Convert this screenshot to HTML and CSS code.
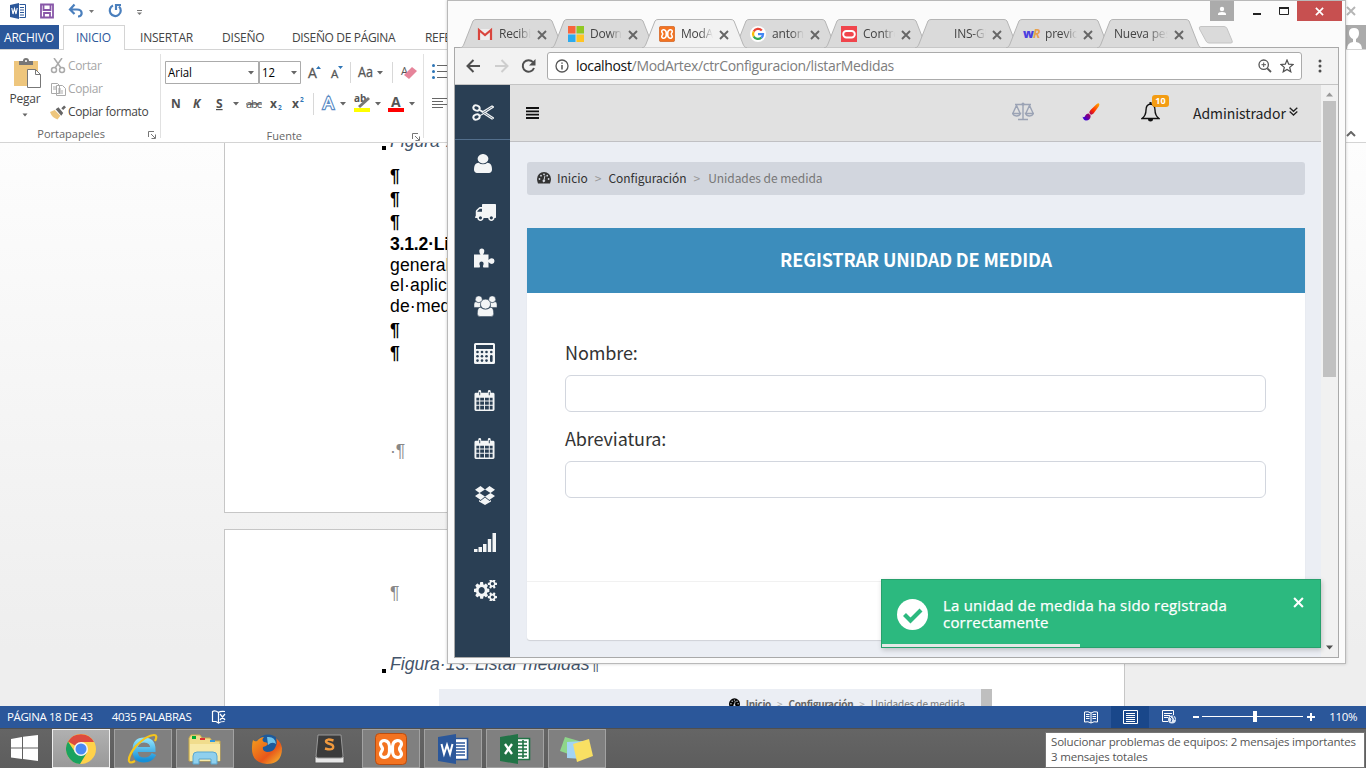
FILE: index.html
```html
<!DOCTYPE html>
<html lang="es">
<head>
<meta charset="utf-8">
<title>Escritorio</title>
<link rel="stylesheet" href="styles.css">
</head>
<body>
<svg class="defs" aria-hidden="true">
  <defs>
    <symbol id="tabshape" viewBox="0 0 105 29"><path d="M0 29C3 28 3 27 4 25L13 2Q14 .5 16 .5H89Q91 .5 92 2L101 25C102 27 102 28 105 29Z"/></symbol>
    <symbol id="x" viewBox="0 0 10 10"><path d="M1 1l8 8M9 1L1 9" fill="none" stroke="currentColor" stroke-width="1.9"/></symbol>
    <symbol id="caret" viewBox="0 0 6 4"><path d="M.5.5h5L3 3.5z" fill="#666"/></symbol>
    <symbol id="launch" viewBox="0 0 8 8"><path d="M.5 6V.5H6M3 3l4 4M7.5 3.5v4h-4" fill="none" stroke="#777"/></symbol>
    <symbol id="calendar" viewBox="0 0 21 22"><path fill-rule="evenodd" d="M1.500 3H4V1.500Q4 0 5.500 0T7 1.500V3H14V1.500Q14 0 15.500 0T17 1.500V3H19.500Q21 3 21 4.500V20.500Q21 22 19.500 22H1.500Q0 22 0 20.500V4.500Q0 3 1.500 3ZM5 2V5.500H6V2ZM15 2V5.500H16V2ZM2 8v3h3V8ZM6 8v3h4V8ZM11 8v3h4V8ZM16 8v3h3V8ZM2 12v3.500h3V12ZM6 12v3.500h4V12ZM11 12v3.500h4V12ZM16 12v3.500h3V12ZM2 16.500v4h3v-4ZM6 16.500v4h4v-4ZM11 16.500v4h4v-4ZM16 16.500v4h3v-4Z"/></symbol>
    <symbol id="xampp" viewBox="0 0 32 32"><rect x=".5" y=".5" width="31" height="31" rx="4" fill="#f37321" stroke="#b94d10"/><path d="M14.500 13.500C14 6 5.500 6 5.500 11 5.500 13.500 7.500 14 7.500 16 7.500 18 5.500 18.500 5.500 21 5.500 26 14 26 14.500 18.500ZM17.500 13.500C18 6 26.500 6 26.500 11 26.500 13.500 24.500 14 24.500 16 24.500 18 26.500 18.500 26.500 21 26.500 26 18 26 17.500 18.500Z" fill="none" stroke="#fff" stroke-width="3.200" stroke-linejoin="round"/></symbol>
    <symbol id="gauge" viewBox="0 0 14 12"><path d="M7 0a7 7 0 0 1 7 7q0 2-1 4.500H1Q0 9 0 7a7 7 0 0 1 7-7Z"/><g fill="#d2d6de"><circle cx="2.500" cy="7" r=".9"/><circle cx="4" cy="3.700" r=".9"/><circle cx="7" cy="2.300" r=".9"/><circle cx="10.200" cy="3.700" r=".9"/><circle cx="11.600" cy="7" r=".9"/><path d="M7.500 3.500l.9.3-.8 4a1.300 1.300 0 1 1-1-.2z"/></g></symbol>
    <linearGradient id="paint" x1="1" y1="0" x2="0" y2="1"><stop offset="0" stop-color="#ffb000"/><stop offset=".4" stop-color="#ff2a00"/><stop offset=".62" stop-color="#a00060"/><stop offset="1" stop-color="#1800ff"/></linearGradient>
    <linearGradient id="iegrad" x1="0" y1="0" x2="0" y2="1"><stop offset="0" stop-color="#8be0fb"/><stop offset="1" stop-color="#1590d8"/></linearGradient>
    <linearGradient id="fox" x1="0" y1="0" x2="1" y2="1"><stop offset="0" stop-color="#f5a11c"/><stop offset=".6" stop-color="#e8571a"/><stop offset="1" stop-color="#f7c331"/></linearGradient>
  </defs>
</svg>

<main class="word">
  <header class="titlebar">
    <svg class="qat" width="150" height="25" viewBox="0 0 150 25">
      <path d="M10 5l9-2v16l-9-2z" fill="#2b579a"/><path d="M19.500 4.500h6v13h-6M20 7.500h4M20 10h4M20 12.500h4M20 15h4" fill="none" stroke="#2b579a"/><path d="M11.800 8l1.200 6 1.500-5.500L16 14l1.200-6" fill="none" stroke="#fff" stroke-width="1.100"/>
      <path d="M41 4.500h12v13H41zM43.500 5v5h7V5M44 17v-4h6v4" fill="none" stroke="#8857a8" stroke-width="1.800"/>
      <path d="M70 9.500h7c6 0 6 7 1 7M74.500 4.500L70 9.500l4.500 4.500" fill="none" stroke="#4a7fbd" stroke-width="2.200"/>
      <path d="M89 10h5l-2.500 3z" fill="#777"/>
      <path d="M113 5.500a5.500 5.500 0 1 0 6 1M116 10V5h5" fill="none" stroke="#4a7fbd" stroke-width="2.200"/>
      <path d="M137 10.500h5" stroke="#777"/><path d="M137 12.500h5l-2.500 2.500z" fill="#777"/>
    </svg>
    <svg class="word-close" width="10" height="10"><use href="#x"/></svg>
  </header>
  <nav class="wtabs">
    <span class="wtab file">ARCHIVO</span>
    <span class="wtab current">INICIO</span>
    <span class="wtab insert">INSERTAR</span>
    <span class="wtab design">DISEÑO</span>
    <span class="wtab layout">DISEÑO DE PÁGINA</span>
    <span class="wtab refs">REFERENCIAS</span>
    <svg class="avatar" width="20" height="24" viewBox="0 0 20 24"><path fill="#ababab" d="M0 0h20v24H0z"/><path d="M1 24q0-6 6-7v-3Q3 12 3 8q0-5 5-5t5 5q0 4-3 6v3q6 1 6 7z" fill="#fff"/></svg>
  </nav>
  <section class="ribbon">
    <div class="group clip">
      <div class="clip-body">
        <div class="paste">
          <svg width="32" height="32" viewBox="0 0 32 32"><path d="M2 3h24v25H2z" fill="#eec67d"/><path d="M7 7V3h4q0-3 3-3t3 3h4v4z" fill="#777"/><circle cx="14" cy="3" r="1" fill="#fff"/><path d="M15.500 11.500h8l5 5v13h-13z" fill="#fff" stroke="#777"/><path d="M23.500 11.500v5h5" fill="none" stroke="#777"/></svg>
          <span class="paste-label">Pegar</span>
          <svg width="6" height="4"><use href="#caret"/></svg>
        </div>
        <div class="cmds">
          <div class="cmd off"><svg width="16" height="16" viewBox="0 0 16 16"><g fill="none" stroke="#aaa" stroke-width="1.500"><path d="M4 0l7 10M12 0L5 10"/><circle cx="4" cy="12" r="2.500"/><circle cx="12" cy="12" r="2.500"/></g></svg><span>Cortar</span></div>
          <div class="cmd off copy"><svg width="16" height="16" viewBox="0 0 16 16"><g fill="#fff" stroke="#aaa"><path d="M1.500 2.500h6l2 2v8h-8zM6.500 4.500h6l3 3v7h-9z"/><path d="M3 6h3M3 8h3M8 8h3M8 10h5M8 12h5"/></g></svg><span>Copiar</span></div>
          <div class="cmd fmt"><svg width="16" height="16" viewBox="0 0 17 16"><path d="M0 8l5-2 6 6-3 4q-6-2-8-8z" fill="#eec67d"/><path d="M6 5l3-2 5 6-2 3zM12 4l3-3 2 2-3 3z" fill="#666"/></svg><span>Copiar formato</span></div>
        </div>
      </div>
      <div class="group-label"><span class="lbl-clip">Portapapeles</span><svg width="8" height="8"><use href="#launch"/></svg></div>
    </div>
    <div class="group font">
      <svg class="font-tools" width="262" height="66" viewBox="0 0 262 66">
        <g fill="#fff" stroke="#ababab"><path d="M4.500 3.500h93v22h-93zM98.500 3.500h41v22h-41z"/></g>
        <g fill="#666"><path d="M87 13h6l-3 3.500zM130 13h6l-3 3.500zM216 13h6l-3 3.500zM72 44h6l-3 3.500zM179 44h6l-3 3.500zM214 44h6l-3 3.500zM248 44h6l-3 3.500z"/></g>
        <g font-family="Open Sans" font-size="12" fill="#000"><text x="7" y="19" textLength="24" lengthAdjust="spacingAndGlyphs">Arial</text><text x="101" y="19" textLength="13" lengthAdjust="spacingAndGlyphs">12</text></g>
        <g font-family="Open Sans" fill="#555" stroke="#555" stroke-width=".3"><text x="147" y="20" font-size="14">A</text><text x="170" y="20" font-size="11.500">A</text><text x="197" y="19" font-size="14" textLength="15" lengthAdjust="spacingAndGlyphs">Aa</text></g>
        <path d="M155 11h5l-2.500-3zM177 8h5l-2.500 3z" fill="#2e75b6"/>
        <path d="M189.500 4v21M231.500 4v21M152.500 35v22" stroke="#d8d8d8"/>
        <text x="240" y="17" font-size="11" font-family="Open Sans" fill="#555">A</text><path d="M243 17l8-8 5 4-8 8z" fill="#e6849a"/>
        <g fill="#505050" font-family="Open Sans" font-weight="bold" font-size="12"><text x="10" y="50">N</text><text x="32" y="50" font-style="italic">K</text><text x="55" y="50" text-decoration="underline">S</text><text x="85" y="50" font-size="11" font-weight="normal" text-decoration="line-through" textLength="16">abc</text><text x="109" y="50">x</text><text x="131" y="50">x</text></g>
        <g fill="#2e75b6" font-family="Open Sans" font-weight="bold" font-size="6.500"><text x="117" y="52">2</text><text x="139" y="44">2</text></g>
        <text x="162" y="51" font-family="Open Sans" font-size="17" fill="#fff" stroke="#5b8bc4" stroke-width="2.400" paint-order="stroke">A</text>
        <text x="193" y="44" font-size="10" font-weight="bold" font-family="Open Sans" fill="#555">ab</text><path d="M198 49l10-9" stroke="#777" stroke-width="3"/><path d="M193 50h16v4h-16z" fill="#ff0"/>
        <text x="230" y="49" font-size="14" font-weight="bold" font-family="Open Sans" fill="#555">A</text><path d="M227 50h16v4h-16z" fill="#f00"/>
      </svg>
      <div class="group-label"><span class="lbl-font">Fuente</span><svg width="8" height="8"><use href="#launch"/></svg></div>
    </div>
    <div class="group para">
      <svg width="24" height="60" viewBox="0 0 24 60"><g fill="#2e75b6"><circle cx="9.500" cy="11.500" r="1.500"/><circle cx="9.500" cy="17.500" r="1.500"/><circle cx="9.500" cy="23.500" r="1.500"/></g><path d="M13 11.500h11M13 17.500h11M13 23.500h11M8 44.500h16M8 47.500h11M8 50.500h16M8 53.500h11" stroke="#666"/></svg>
    </div>
    <svg class="collapse" width="10" height="6" viewBox="0 0 10 6"><path d="M1 5l4-4 4 4" fill="none" stroke="#666" stroke-width="2"/></svg>
  </section>

  <section class="canvas">
    <article class="sheet first">
      <p class="caption"><i class="dot"></i>Figura·12.</p>
      <p class="mark">¶</p><p class="mark">¶</p><p class="mark">¶</p>
      <p class="line"><b>3.1.2·Li</b></p><p class="line">general</p><p class="line">el·aplica</p><p class="line">de·medi</p>
      <p class="mark gap">¶</p><p class="mark">¶</p>
      <p class="mark foot">·¶</p>
    </article>
    <article class="sheet second">
      <p class="mark head">¶</p>
      <p class="caption cap2"><i class="dot"></i>Figura·13. Listar medidas¶</p>
      <div class="shot"><div class="shot-crumb"><svg width="11" height="10"><use href="#gauge"/></svg><b>Inicio</b><em>&gt;</em><b>Configuración</b><em>&gt;</em><span>Unidades de medida</span></div><i class="shot-scroll"></i></div>
    </article>
  </section>

  <footer class="status">
    <span class="st-page">PÁGINA 18 DE 43</span><span class="st-words">4035 PALABRAS</span>
    <svg width="16" height="14" viewBox="0 0 16 14"><path d="M7.500 2.500Q4 0 1.500 1.500v10H5l2.500 1.500zM7.500 2.500Q9 1 14 1.500M7.500 13q2-1.500 6-1.500M9 4l5 6M14 4l-5 6" fill="none" stroke="#fff" stroke-width="1.200"/></svg>
    <div class="views">
      <svg class="v-read" width="14" height="13" viewBox="0 0 14 13"><path d="M7 2Q4 0 .5 1v10Q4 10 7 12q3-2 6.500-1V1Q10 0 7 2zv10M2 3.500h3.500M2 5.500h3.500M2 7.500h3.500M8.500 3.500H12M8.500 5.500H12M8.500 7.500H12" fill="none" stroke="#fff"/></svg>
      <span class="v-print"><svg width="15" height="14" viewBox="0 0 15 14"><path d="M.5.500h14v13H.5zM3 3.500h9M3 5.500h9M3 7.500h9M3 9.500h9M3 11.500h9" fill="none" stroke="#fff"/></svg></span>
      <svg class="v-web" width="15" height="14" viewBox="0 0 15 14"><path d="M6 11.500H.5V.5h11V5M2 3.500h8M2 5.500h6M2 7.500h4" fill="none" stroke="#fff"/><circle cx="10" cy="9.500" r="4" fill="#dce6f4"/><path d="M8 7l2 2-1 3M11 6l2 4" stroke="#2b579a" fill="none"/></svg>
      <svg class="zoom" width="124" height="12" viewBox="0 0 124 12"><path d="M0 6h6M114 6h8M118 2v8" stroke="#fff" stroke-width="2"/><path d="M9 5.500h101" stroke="#fff"/><path d="M60 0h4v11h-4z" fill="#fff"/></svg>
      <span class="pct">110%</span>
    </div>
  </footer>
</main>

<section class="browser">
  <div class="tabstrip">
    <div class="tab"><svg class="shape"><use href="#tabshape"/></svg><svg class="fav" viewBox="0 0 16 16"><path d="M1 3h14v11H1z" fill="#eee"/><path d="M2 14V4l6 5 6-5v10" fill="none" stroke="#d9453d" stroke-width="2.200"/></svg><span class="name">Recibidos</span><svg class="tx"><use href="#x"/></svg></div>
    <div class="tab"><svg class="shape"><use href="#tabshape"/></svg><svg class="fav" viewBox="0 0 16 16"><path d="M0 0h7.500v7.500H0z" fill="#f8643c"/><path d="M8.500 0H16v7.500H8.500z" fill="#91c823"/><path d="M0 8.500h7.500V16H0z" fill="#2cabee"/><path d="M8.500 8.500H16V16H8.500z" fill="#ffc423"/></svg><span class="name">Download</span><svg class="tx"><use href="#x"/></svg></div>
    <div class="tab active"><svg class="shape"><use href="#tabshape"/></svg><svg class="fav"><use href="#xampp"/></svg><span class="name">ModArtex</span><svg class="tx"><use href="#x"/></svg></div>
    <div class="tab"><svg class="shape"><use href="#tabshape"/></svg><svg class="fav" viewBox="0 0 16 16"><circle cx="8" cy="8" r="8" fill="#fff"/><g fill="none" stroke-width="2.300"><path d="M11.800 4.600A5 5 0 0 0 3.700 5.500" stroke="#ea4335"/><path d="M3.700 5.500a5 5 0 0 0 0 5" stroke="#fbbc05"/><path d="M3.700 10.500a5 5 0 0 0 7.600 1.200" stroke="#34a853"/><path d="M11.300 11.700Q13 10.500 13 8.200H8" stroke="#4285f4"/></g></svg><span class="name">antonio</span><svg class="tx"><use href="#x"/></svg></div>
    <div class="tab"><svg class="shape"><use href="#tabshape"/></svg><svg class="fav" viewBox="0 0 16 16"><path fill="#f0454c" d="M0 0h16v16H0z"/><rect x="2.200" y="5" width="11.600" height="6.500" rx="3.200" fill="none" stroke="#fff" stroke-width="1.900"/></svg><span class="name">Control</span><svg class="tx"><use href="#x"/></svg></div>
    <div class="tab"><svg class="shape"><use href="#tabshape"/></svg><svg class="fav"></svg><span class="name">INS-GU</span><svg class="tx"><use href="#x"/></svg></div>
    <div class="tab"><svg class="shape"><use href="#tabshape"/></svg><span class="fav wr"><b>w</b><i>R</i></span><span class="name">previous</span><svg class="tx"><use href="#x"/></svg></div>
    <div class="tab plain"><svg class="shape"><use href="#tabshape"/></svg><span class="name">Nueva pestaña</span><svg class="tx"><use href="#x"/></svg></div>
    <svg class="newtab" width="36" height="18" viewBox="0 0 36 18"><path d="M3 .5h23q2 0 3 2l5 12q1 2.500-1 2.500H11q-2 0-3-2L1.500 3Q.5.500 3 .5z" fill="#dadada" stroke="#c4c4c4"/></svg>
    <div class="winbtns">
      <span class="who"><svg width="10" height="10" viewBox="0 0 10 10"><circle cx="5" cy="3" r="2.200" fill="#fff"/><path d="M1 9V8q0-2 4-2t4 2v1z" fill="#fff"/></svg></span>
      <svg width="63" height="20" viewBox="0 0 63 20"><path d="M19 13h8" stroke="#222" stroke-width="2"/><path d="M45.500 6.500h9v7h-9z" fill="none" stroke="#222"/><path d="M45 7h10" stroke="#222" stroke-width="2"/></svg>
      <span class="close"><svg width="9" height="9"><use href="#x"/></svg></span>
    </div>
  </div>
  <div class="client">
    <div class="toolbar">
      <svg width="90" height="20" viewBox="0 0 90 20"><path d="M25 10H13M18.500 4L12.500 10l6 6" fill="none" stroke="#4f4f4f" stroke-width="2"/><path d="M40 10h12M46.500 4l6 6-6 6" fill="none" stroke="#cecece" stroke-width="2"/><path d="M78 6.200A5.800 5.800 0 1 0 79 12" fill="none" stroke="#4f4f4f" stroke-width="2"/><path d="M80.500 3v6.500H74z" fill="#4f4f4f"/></svg>
      <div class="omni">
        <svg width="14" height="14" viewBox="0 0 14 14"><circle cx="7" cy="7" r="6" fill="none" stroke="#555" stroke-width="1.300"/><path d="M7 6v4.500M7 3.500v1.300" stroke="#555" stroke-width="1.500"/></svg>
        <span class="url">localhost<em>/ModArtex/ctrConfiguracion/listarMedidas</em></span>
        <svg class="mag" width="14" height="14" viewBox="0 0 14 14"><circle cx="5.700" cy="5.700" r="4.700" fill="none" stroke="#555" stroke-width="1.300"/><path d="M9.300 9.300L13 13" stroke="#555" stroke-width="1.800"/><path d="M3.500 5.700H8M5.700 3.500V8" stroke="#555"/></svg>
        <svg width="14" height="14" viewBox="0 0 14 14"><path d="M7 1l1.700 4.200 4.400.3-3.400 2.900 1.100 4.400L7 10.400l-3.800 2.400 1.100-4.400L.9 5.500l4.400-.3z" fill="none" stroke="#4f4f4f" stroke-width="1.200"/></svg>
      </div>
      <svg class="dots" width="4" height="14" viewBox="0 0 4 14"><g fill="#4f4f4f"><circle cx="2" cy="2" r="1.500"/><circle cx="2" cy="7" r="1.500"/><circle cx="2" cy="12" r="1.500"/></g></svg>
    </div>
    <div class="viewport">
      <aside class="side">
        <div class="logo"><svg width="22" height="17" viewBox="0 0 22 17"><g fill="none" stroke="#f3f5f6"><ellipse cx="4.500" cy="4" rx="3.200" ry="2.500" stroke-width="2" transform="rotate(20 4.500 4)"/><ellipse cx="4.500" cy="13" rx="3.200" ry="2.500" stroke-width="2" transform="rotate(-20 4.500 13)"/><path d="M7 5.500l4 2L20 2l1.500 1L10 10.500l-3 1.500M7 5.500L10 8M10 8.500L20 15l1.500-1-9-6" stroke-width="1.200"/></g></svg></div>
        <svg class="ic user" width="18" height="19" viewBox="256 128 1280 1408" preserveAspectRatio="none"><path d="M1536 1399q0 109-62.500 187t-150.500 78h-854q-88 0-150.500-78t-62.500-187q0-85 8.500-160.500t31.500-152 58.500-131 94-89 134.500-34.500q131 128 313 128t313-128q76 0 134.500 34.500t94 89 58.500 131 31.500 152 8.500 160.500zm-256-887q0 159-112.500 271.500t-271.500 112.500-271.500-112.500-112.500-271.500 112.500-271.500 271.500-112.500 271.500 112.500 112.500 271.500z" transform="matrix(1 0 0 .917 0 10)"/></svg>
        <svg class="ic truck" width="21" height="17" viewBox="64 256 1728 1408" preserveAspectRatio="none"><path d="M640 1408q0-52-38-90t-90-38-90 38-38 90 38 90 90 38 90-38 38-90zm-384-512h384v-256h-158q-13 0-22 9l-195 195q-9 9-9 22v30zm1280 512q0-52-38-90t-90-38-90 38-38 90 38 90 90 38 90-38 38-90zm256-1088v1024q0 15-4 26.500t-13.500 18.500-16.500 11.500-23.500 6-22.500 2-25.500 0-22.500-.5q0 106-75 181t-181 75-181-75-75-181h-384q0 106-75 181t-181 75-181-75-75-181h-64q-3 0-22.500.5t-25.500 0-22.500-2-23.500-6-16.500-11.500-13.500-18.500-4-26.500q0-26 19-45t45-19v-320q0-8-.5-35t0-38 2.500-34.500 6.500-37 14-30.500 22.500-30l198-198q19-19 50.500-32t58.500-13h160v-192q0-26 19-45t45-19h1024q26 0 45 19t19 45z"/></svg>
        <svg class="ic puzzle" width="21" height="20" viewBox="0 0 21 20"><path d="M0 6.500H6.500Q5.300 5 5.300 3A2.500 2.500 0 0 1 10.300 3Q10.300 5 9 6.500H14.500V12Q16 10 18 10.200Q20.500 10.500 20.500 13T18 16Q16 16 14.500 14V19.500H9.500Q8.500 18.500 9.500 16.500Q10 13.500 7.500 13.500T5.500 16.500Q6.500 18.500 5.500 19.500H0Z"/></svg>
        <svg class="ic users" width="23" height="21" viewBox="0 0 24 22" preserveAspectRatio="none"><g stroke="#2a3f54" stroke-width=".5"><circle cx="5" cy="3.500" r="3.600"/><circle cx="19" cy="3.500" r="3.600"/><path d="M0 12V9q0-3 2-3 3 2 5.500 0Q6 10 7 12zM24 12V9q0-3-2-3-3 2-5.500 0Q18 10 17 12z"/><circle cx="12" cy="8.500" r="5.200"/><path d="M3.500 18.500q0-7 3.500-6.500 5 4 10 0 3.500-.5 3.500 6.500 0 3-3 3h-11q-3 0-3-3z"/></g></svg>
        <svg class="ic calc" width="21" height="21" viewBox="0 0 21 21"><path fill-rule="evenodd" d="M1.500 0h18Q21 0 21 1.500v18q0 1.500-1.500 1.500h-18Q0 21 0 19.500v-18Q0 0 1.500 0zM2 2v4h17V2z"/><g fill="#2a3f54"><circle cx="3.500" cy="9" r="1.300"/><circle cx="8" cy="9" r="1.300"/><circle cx="12.500" cy="9" r="1.300"/><circle cx="17.300" cy="9" r="1.300"/><circle cx="3.500" cy="13.300" r="1.300"/><circle cx="8" cy="13.300" r="1.300"/><circle cx="12.500" cy="13.300" r="1.300"/><circle cx="3.500" cy="17.600" r="1.300"/><circle cx="8" cy="17.600" r="1.300"/><circle cx="12.500" cy="17.600" r="1.300"/><rect x="16" y="12" width="2.600" height="7" rx="1.200"/></g></svg>
        <svg class="ic cal1" width="21" height="21"><use href="#calendar"/></svg>
        <svg class="ic cal2" width="21" height="21"><use href="#calendar"/></svg>
        <svg class="ic box" width="20" height="19" viewBox="0 0 20 19"><path d="M5.500 0L10 3.500 4.500 7 0 3.800zM14.500 0L10 3.500 15.500 7 20 3.800zM0 10l4.500-3L10 10.500 5.700 14zM20 10l-4.500-3L10 10.500 14.300 14zM10 11.500l4.500 3.500 1.500-1v1.400L10 19l-6-3.600V14l1.500 1z"/></svg>
        <svg class="ic bars" width="22" height="19" viewBox="0 0 22 19"><path d="M0 16h3.500v3H0zM4.500 14H8v5H4.500zM9 11h3.500v8H9zM13.800 6h3.400v13h-3.400zM18.500 0H22v19h-3.500z"/></svg>
        <svg class="ic cogs" width="23" height="21" viewBox="0 100 1920 1600" preserveAspectRatio="none"><path d="M896 896q0-106-75-181t-181-75-181 75-75 181 75 181 181 75 181-75 75-181zm768 512q0-52-38-90t-90-38-90 38-38 90q0 53 37.500 90.500t90.500 37.500 90.500-37.500 37.500-90.500zm0-1024q0-52-38-90t-90-38-90 38-38 90q0 53 37.500 90.500t90.500 37.500 90.500-37.500 37.500-90.500zm-384 421v185q0 10-7 19.500t-16 10.500l-155 24q-11 35-32 76 34 48 90 115 7 11 7 20 0 12-7 19-23 30-82.500 89.500t-78.500 59.500q-11 0-21-7l-115-90q-37 19-77 31-11 108-23 155-7 24-30 24h-186q-11 0-20-7.500t-10-17.500l-23-153q-34-10-75-31l-118 89q-7 7-20 7-11 0-21-8-144-133-144-160 0-9 7-19 10-14 41-53t47-61q-23-44-35-82l-152-24q-10-1-17-9.500t-7-19.500v-185q0-10 7-19.500t16-10.500l155-24q11-35 32-76-34-48-90-115-7-11-7-20 0-12 7-20 22-30 82-89t79-59q11 0 21 7l115 90q34-18 77-32 11-108 23-154 7-24 30-24h186q11 0 20 7.500t10 17.500l23 153q34 10 75 31l118-89q8-7 20-7 11 0 21 8 144 133 144 160 0 8-7 19-12 16-42 54t-45 60q23 48 34 82l152 23q10 2 17 10.500t7 19.500zm640 533v140q0 16-149 31-12 27-30 52 51 113 51 138 0 4-4 7-122 71-124 71-8 0-46-47t-52-68q-20 2-30 2t-30-2q-14 21-52 68t-46 47q-2 0-124-71-4-3-4-7 0-25 51-138-18-25-30-52-149-15-149-31v-140q0-16 149-31 13-29 30-52-51-113-51-138 0-4 4-7 4-2 35-20t59-34 30-16q8 0 46 46.500t52 67.500q20-2 30-2t30 2q51-71 92-112l6-2q4 0 124 70 4 3 4 7 0 25-51 138 17 23 30 52 149 15 149 31zm0-1024v140q0 16-149 31-12 27-30 52 51 113 51 138 0 4-4 7-122 71-124 71-8 0-46-47t-52-68q-20 2-30 2t-30-2q-14 21-52 68t-46 47q-2 0-124-71-4-3-4-7 0-25 51-138-18-25-30-52-149-15-149-31v-140q0-16 149-31 13-29 30-52-51-113-51-138 0-4 4-7 4-2 35-20t59-34 30-16q8 0 46 46.500t52 67.500q20-2 30-2t30 2q51-71 92-112l6-2q4 0 124 70 4 3 4 7 0 25-51 138 17 23 30 52 149 15 149 31z"/></svg>
      </aside>
      <div class="page">
        <header class="topnav">
          <svg class="burger" width="13" height="12" viewBox="0 0 13 12"><path d="M0 1h13M0 4.300h13M0 7.600h13M0 11h13" stroke="#111" stroke-width="1.800"/></svg>
          <svg class="scale" width="22" height="19" viewBox="0 0 22 19"><path d="M3 2.500h16M11 2v15M6 17.500h10M1 11L4.500 3.500 8 11M14 11l3.500-7.500L21 11M.5 11.500h8q-1 2.500-4 2.500t-4-2.500zM13.500 11.500h8q-1 2.500-4 2.500t-4-2.500z" fill="none" stroke="#9ba3b5" stroke-width="1.400"/><circle cx="11" cy="2" r="1.500" fill="#9ba3b5"/></svg>
          <svg class="brush" width="18" height="18" viewBox="0 0 18 18"><path d="M17 .5q1 .8-.3 3L11.500 10.500q-1.500 1.500-3 1L7.300 9.800q0-1.600 1.500-3L14.500 1.300Q16.300 0 17 .5zM6.700 10.500l2 2.300Q8.500 17.500 4 17.500 1.500 17.500.5 13.800q1.500.8 2.300-.3Q4 10.500 6.700 10.500z" fill="url(#paint)"/></svg>
          <div class="bell"><svg width="19" height="20" viewBox="0 0 19 20"><path d="M9.500 2Q14 2.500 14 8q0 5.500 4 8.500H1q4-3 4-8.500Q5 2.500 9.500 2z" fill="none" stroke="#111" stroke-width="1.400"/><path d="M8.500 0h2v2.500h-2zM7 17h5q0 2.500-2.500 2.500T7 17z" fill="#111"/></svg><span class="badge">10</span></div>
          <span class="admin">Administrador</span>
          <svg class="dd" width="9" height="9" viewBox="0 0 9 9"><path d="M.7.800L4.500 4.300 8.300.8M.7 4.600L4.500 8.100l3.800-3.500" fill="none" stroke="#222" stroke-width="1.300"/></svg>
        </header>
        <div class="content">
          <nav class="crumbs"><svg width="14" height="12" fill="#333"><use href="#gauge"/></svg><span class="c1">Inicio</span><em>&gt;</em><span class="c2">Configuración</span><em>&gt;</em><span class="c3">Unidades de medida</span></nav>
          <section class="card">
            <h1><span>REGISTRAR UNIDAD DE MEDIDA</span></h1>
            <form class="form">
              <label for="n"><span class="l1">Nombre:</span></label><input id="n" type="text">
              <label for="a"><span class="l2">Abreviatura:</span></label><input id="a" type="text">
            </form>
            <footer class="card-foot"></footer>
          </section>
        </div>
        <div class="toast">
          <svg class="ok" width="31" height="31" viewBox="0 0 31 31"><circle cx="15.500" cy="15.500" r="15.500" fill="#fff"/><path d="M7.500 15.500l6 6L24 11" fill="none" stroke="#2cb97f" stroke-width="4.200"/></svg>
          <p><span class="t1">La unidad de medida ha sido registrada</span><br><span class="t2">correctamente</span></p>
          <svg class="toast-x" width="11" height="11"><use href="#x"/></svg>
          <i class="progress"></i>
        </div>
      </div>
      <div class="scroll"><svg width="7" height="5" viewBox="0 0 7 5"><path d="M0 4.500L3.500.5 7 4.500z" fill="#999"/></svg><i class="thumb"></i><svg class="down" width="7" height="5" viewBox="0 0 7 5"><path d="M0 .5h7L3.500 4.500z" fill="#505050"/></svg></div>
    </div>
  </div>
</section>

<footer class="taskbar">
  <svg class="start" width="27" height="26" viewBox="0 0 27 26"><path d="M0 4l11-2v10.500H0zM12 1.800L27 0v12.500H12zM0 13.500h11V24L0 22.500zM12 13.500h15V26l-15-2z" fill="#fff"/></svg>
  <span class="task on"><svg width="30" height="30" viewBox="0 0 30 30"><circle cx="15" cy="15" r="15" fill="#ffd24a"/><path d="M15 15L2 7.500A15 15 0 0 1 28 8L15 8z" fill="#dd4b3e"/><path d="M2 7.500A15 15 0 0 0 14 30L21 18.500 9 18z" fill="#1aa260"/><circle cx="15" cy="15" r="7" fill="#f5f5f5"/><circle cx="15" cy="15" r="5.500" fill="#4a8af4"/></svg></span>
  <span class="task"><svg width="32" height="32" viewBox="0 0 32 32"><path d="M27 21Q24 27 17 27 8 27 8 17T17 7q9 0 9 9.500H9" fill="none" stroke="url(#iegrad)" stroke-width="5"/><path d="M28 8Q31 2 27 2 20 2 9 13 1 23 2 28q1 3 6 0" fill="none" stroke="#f6c51c" stroke-width="2.200"/></svg></span>
  <span class="task"><svg width="34" height="32" viewBox="0 0 34 32"><path d="M1 5l2-3h9l2 3h8l2 3h8v20H1z" fill="#f0dc8c" stroke="#c9ac4d"/><path d="M4 3h4v3H4z" fill="#0a3"/><path d="M12 5h5v2h-5z" fill="#d33"/><path d="M22 7h5v2h-5z" fill="#39d"/><path d="M2 11h30v17H2z" fill="#f7e9a8"/><path d="M5 31v-8q0-4 4-4h16q4 0 4 4v8h-6v-5H11v5z" fill="#8fd0ee" stroke="#5ba7cf"/></svg></span>
  <span class="task bare"><svg width="32" height="32" viewBox="0 0 32 32"><circle cx="17" cy="14" r="12.500" fill="#1d5a9b"/><path d="M16 4q8-1 9 7-4-3-8 1z" fill="#6fc2ea"/><path d="M2 7q2 2 4 1 3-4 7-4-3 3 0 5 3 0 4 2-2 3-5 3-1 4 4 5 6 0 8-4 3-4 1-10 5 4 6 10 0 16-15 16Q0 30 1 14 1 10 2 7z" fill="url(#fox)"/></svg></span>
  <span class="task bare"><svg width="31" height="30" viewBox="0 0 31 30"><path d="M1 23l2-2h25l2 2v6H1z" fill="#e8e8e8" stroke="#555"/><path d="M4 1h23l2 21q0 2-2 2H4q-2 0-2-2z" fill="#3b3b3b" stroke="#999"/><path d="M19.500 6.500q-7-2-7.500.500 0 2 4 3t3 4q-1 2.500-8 .500" fill="none" stroke="#f19a3e" stroke-width="2.500"/></svg></span>
  <span class="task"><svg width="32" height="32"><use href="#xampp"/></svg></span>
  <span class="task"><svg width="31" height="30" viewBox="0 0 31 30"><path d="M17 4.500h12.500v21H17M18 9h9M18 12h9M18 15h9M18 18h9M18 21h9" fill="#fff" stroke="#2b579a" stroke-width="1.600"/><path d="M0 3l18-3v30L0 27z" fill="#2b579a"/><path d="M3.500 10L6 20l3-9 3 9 2.500-10" fill="none" stroke="#fff" stroke-width="2"/></svg></span>
  <span class="task"><svg width="31" height="30" viewBox="0 0 31 30"><path d="M17 4.500h12.500v21H17M18 8h9M18 11.500h9M18 15h9M18 18.500h9M18 22h9M23 6v18" fill="#fff" stroke="#217346" stroke-width="1.600"/><path d="M0 3l18-3v30L0 27z" fill="#217346"/><path d="M5 10l7 10M12 10L5 20" fill="none" stroke="#fff" stroke-width="2.300"/></svg></span>
  <span class="task"><svg width="34" height="28" viewBox="0 0 34 28"><path d="M5 2l14 4-5 15L0 16z" fill="#8ed68a"/><path d="M7 7l16-1v18l-16-1z" fill="#a2d4f5"/><path d="M13 9l16-5 4 17-16 6z" fill="#f9e063"/></svg></span>
  <div class="tip"><span class="tip1">Solucionar problemas de equipos: 2 mensajes importantes</span><br><span class="tip2">3 mensajes totales</span></div>
</footer>
</body>
</html>
```
FILE: styles.css
```css
* { box-sizing: border-box; }
body { margin: 0; width: 1366px; height: 768px; overflow: hidden; position: relative; display: flex; flex-direction: column; font: 12px/16px "Open Sans", "Noto Sans", sans-serif; color: #444; }
svg { display: block; flex: none; }
p, h1 { margin: 0; }
em, i { font-style: normal; }
span { white-space: nowrap; }
.defs { position: absolute; width: 0; height: 0; }

/* Word */
.word { height: 728px; display: flex; flex-direction: column; background: #fff; }
.titlebar { height: 25px; display: flex; justify-content: space-between; }
.word-close { color: #b5b5b5; margin: 6px 10px 0 0; }
.wtabs { height: 25px; display: flex; border-bottom: 1px solid #d4d4d4; line-height: 25px; letter-spacing: -.2px; }
.wtab { flex: none; }
.file { width: 59px; height: 24px; background: #2b579a; color: #fff; padding-left: 4px; }
.current { width: 62px; margin-left: 4px; height: 25px; border: 1px solid #d4d4d4; border-bottom: 0; background: #fff; color: #2b579a; padding-left: 12px; line-height: 24px; }
.insert { width: 82px; padding-left: 15px; }
.design { width: 70px; padding-left: 15px; }
.layout { width: 133px; padding-left: 15px; letter-spacing: -.35px; }
.refs { width: 100px; padding-left: 15px; letter-spacing: -.3px; }
.avatar { margin-left: auto; }
.ribbon { height: 93px; display: flex; border-bottom: 1px solid #d4d4d4; }
.group { display: flex; flex-direction: column; margin: 4px 0; border-right: 1px solid #e1e1e1; height: 84px; }
.clip { width: 161px; }
.clip-body { display: flex; height: 72px; flex: none; }
.paste { width: 50px; display: flex; flex-direction: column; align-items: center; padding-top: 4px; }
.paste svg:first-child { margin-left: 5px; }
.paste-label { margin: 1px 0 6px; letter-spacing: -.25px; }
.cmds { padding-top: 0; }
.cmd { display: flex; gap: 2px; height: 23px; align-items: center; letter-spacing: -.35px; }
.off { color: #a6a6a6; }
.group-label { display: flex; flex: none; align-items: center; justify-content: flex-end; height: 16px; color: #666; font-size: 11px; }
.clip .group-label { gap: 43px; padding-right: 4px; }
.font { width: 263px; padding-top: 4px; }
.font .group-label { gap: 110px; padding-right: 3px; height: 20px; }
.font-tools { margin-bottom: 0; }
.clip .group-label, .font .group-label { align-items: flex-end; }
.clip .group-label { height: 16px; }
.group-label svg { margin-bottom: 3px; }
.para { border: 0; }
.collapse { margin: 81px 10px 0 auto; }
.canvas { height: 563px; background: linear-gradient(#fdfdfd, #eee 90%); overflow: hidden; padding-left: 224px; }
.sheet { width: 901px; background: #fff; border: 1px solid #c6c6c6; padding-left: 165px; font: 17.6px/20.7px "Liberation Sans", Arial, sans-serif; color: #000; overflow: hidden; }
.first { height: 370px; border-top: 0; display: flow-root; }
.second { height: 200px; margin-top: 16px; }
.caption { font-style: italic; color: #44546a; height: 21px; white-space: nowrap; position: relative; line-height: 20px; margin-top: -12px; margin-bottom: 13px; }
.dot { position: absolute; left: -8px; top: 15px; width: 4px; height: 4px; background: #000; }
.mark { height: 23px; line-height: 23px; }
.line { letter-spacing: .15px; }
.first .mark { font-weight: bold; }
.first .line b { letter-spacing: -.2px; }
.gap { margin-top: 2px; }
.first .foot, .head { color: #888; font-weight: normal; }
.foot { margin-top: 75px; }
.head { margin-top: 52px; }
.cap2 { margin: 49px 0 14px; }
.shot { margin-left: 49px; width: 553px; height: 30px; background: #ebeef4; display: flex; }
.shot-crumb { margin-left: auto; display: flex; gap: 6px; font: 10px/12px "Noto Sans CJK SC", sans-serif; color: #777; padding-top: 9px; letter-spacing: -.1px; }
.shot-crumb b { color: #666; letter-spacing: -.35px; }
.shot-crumb em { color: #aaa; }
.shot-scroll { width: 11px; margin-left: 16px; background: #bfbfbf; }
.status { height: 22px; background: #2b579a; color: #fff; display: flex; align-items: center; padding-left: 7px; flex: none; letter-spacing: -.4px; font-size: 11.500px; }
.st-words { margin: 0 20px 0 19px; }
.views { margin-left: auto; display: flex; align-items: center; height: 22px; padding-right: 9px; }
.v-print { width: 38px; height: 22px; background: #19478a; display: grid; place-items: center; margin: 0 13px 0 13px; }
.zoom { margin: 0 12px 0 16px; }

/* Browser window */
.browser { position: absolute; left: 447px; top: 0; width: 899px; height: 664px; background: #fbfbfb; border: 1px solid #b9b9b9; padding: 0 6px 5px 6px; box-shadow: 0 0 3px rgba(0,0,0,.2); }
.tabstrip { height: 46px; display: flex; padding: 18px 0 0 6px; position: relative; }
.tab { position: relative; width: 105px; height: 29px; margin-right: -14px; padding: 6px 0 0 17px; display: flex; align-items: flex-start; }
.shape { position: absolute; inset: 0; width: 105px; height: 29px; fill: #dadada; stroke: #b5b5b5; }
.active { z-index: 2; }
.active .shape { fill: #f2f2f2; }
.fav { position: relative; width: 16px; height: 16px; margin-top: 1px; }
.wr { font: bold 12px/16px "Open Sans", sans-serif; letter-spacing: -1px; color: #4a3fe0; }
.wr i { color: #e8a04c; font-style: italic; }
.name { position: relative; width: 32px; margin: 0 6px; overflow: hidden; font-size: 12px; line-height: 18px; letter-spacing: -.2px; -webkit-mask-image: linear-gradient(90deg, #000 60%, transparent); mask-image: linear-gradient(90deg, #000 60%, transparent); }
.plain .name { margin-left: 0; width: 54px; }
.tx { position: relative; width: 10px; height: 10px; margin-top: 5px; color: #666; }
.newtab { margin: 7px 0 0 10px; }
.winbtns { position: absolute; right: -3px; top: 0; display: flex; height: 20px; }
.who { width: 24px; background: #ababab; display: grid; place-items: center; }
.close { width: 45px; background: #c75050; color: #fff; display: grid; place-items: center; }
.client { height: 611px; border: 1px solid #a9a9a9; background: #f2f2f2; }
.toolbar { height: 37px; display: flex; align-items: center; border-bottom: 1px solid #c4c4c4; }
.omni { width: 755px; height: 28px; margin-left: 2px; border: 1px solid #ababab; border-radius: 3px; background: #fff; display: flex; align-items: center; padding: 0 7px; }
.url { font-size: 14px; color: #111; margin-left: 7px; letter-spacing: -.34px; }
.url em { color: #7d7d7d; }
.mag { margin: 0 8px 0 auto; }
.dots { margin-left: 16px; }
.viewport { height: 572px; display: flex; }
.side { width: 55px; background: #2a3f54; fill: #f3f5f6; flex: none; }
.logo { height: 55px; border-bottom: 1px solid #536f8c; padding: 19px 0 0 17px; }
.ic { margin-left: 19px; }
.user { margin-top: 14px; }
.truck { margin: 31px 0 0 20px; }
.puzzle { margin-top: 27px; }
.users { margin-top: 28px; }
.calc { margin-top: 26px; }
.cal1 { margin-top: 26px; }
.cal2 { margin-top: 27px; }
.box { margin: 27px 0 0 20px; }
.bars { margin-top: 28px; }
.cogs { margin-top: 28px; }
.page { width: 811px; background: #ebeef4; position: relative; font-family: "Noto Sans CJK SC", sans-serif; }
.topnav { height: 57px; background: #e1e1e1; border-bottom: 1px solid #c0c0c3; display: flex; align-items: center; padding: 0 0 1px 16px; color: #222; }
.scale { margin: -3px 0 0 473px; }
.brush { margin: -2px 0 0 48px; }
.bell { margin: -1px 0 0 41px; position: relative; }
.badge { position: absolute; left: 11px; top: -7px; width: 17px; height: 12px; border-radius: 3px; background: #f39c12; color: #fff; font: bold 9px/12px "Open Sans", sans-serif; text-align: center; }
.admin { margin-left: 33px; font-size: 14px; width: 93px; letter-spacing: -.05px; }
.dd { margin: -2px 0 0 3px; }
.content { padding: 20px 16px 0 17px; }
.crumbs { height: 33px; border-radius: 3px; background: #d2d6de; display: flex; align-items: center; padding: 0 0 2px 10px; font-size: 12px; color: #333; }
.crumbs em { color: #999; margin: 0 7px; }
.c1 { margin-left: 6px; }
.c2 { letter-spacing: -.05px; }
.c3 { color: #777; letter-spacing: -.05px; margin-left: 1px; }
.card { margin-top: 33px; background: #fff; height: 412px; border-radius: 0 0 3px 3px; box-shadow: 0 1px 1px rgba(0,0,0,.12); }
.card h1 { height: 65px; background: #3c8dbc; color: #fff; font-size: 18px; line-height: 63px; text-align: center; font-weight: bold; letter-spacing: -.15px; }
.form { height: 289px; padding: 46px 39px 0 38px; border-bottom: 1px solid #f1f1f1; font-size: 18px; color: #333; letter-spacing: -.1px; }
.form label { display: block; height: 36px; line-height: 26px; }
.form input { display: block; width: 701px; height: 37px; border: 1px solid #d2d6de; border-radius: 6px; margin-bottom: 13px; background: #fff; }
.toast { position: absolute; left: 371px; top: 494px; width: 440px; height: 69px; background: #2cb97f; border: 1px solid #27a06c; color: #fff; box-shadow: 1px 2px 5px rgba(0,0,0,.2); display: flex; padding: 19px 15px 0; font: 500 15px/17px "Open Sans", sans-serif; letter-spacing: .2px; -webkit-text-stroke: .25px #fff; }
.toast p { margin-left: 15px; margin-top: -2px; }
.toast-x { margin: -2px 1px 0 auto; }
.progress { position: absolute; left: 0; bottom: 0; width: 198px; height: 3px; background: #e4e8e6; }
.scroll { width: 17px; background: #f1f1f1; display: flex; flex-direction: column; align-items: center; padding: 7px 0; }
.thumb { width: 13px; height: 276px; background: #c1c1c1; margin-top: 4px; }
.down { margin-top: auto; }

/* Taskbar */
.taskbar { height: 40px; background: linear-gradient(#656565, #5d5d5d); border-top: 1px solid #4f4f4f; display: flex; align-items: center; padding-left: 12px; position: relative; }
.task { width: 58px; height: 39px; margin-right: 4px; border: 1px solid #a2a2a2; background: #808080; display: grid; place-items: center; }
.start { margin: -2px 13px 0 -1px; padding: 0; }
.start + .task { margin-left: 1px; }
.on { background: linear-gradient(#b0b0b0, #999); border-color: #eee; }
.bare { background: none; border-color: transparent; }
.tip { position: absolute; left: 1045px; top: 3px; width: 320px; height: 36px; background: #fff; border: 1px solid #767676; color: #555; padding: 1px 5px; font-size: 11.500px; line-height: 15px; letter-spacing: -.18px; }
```
